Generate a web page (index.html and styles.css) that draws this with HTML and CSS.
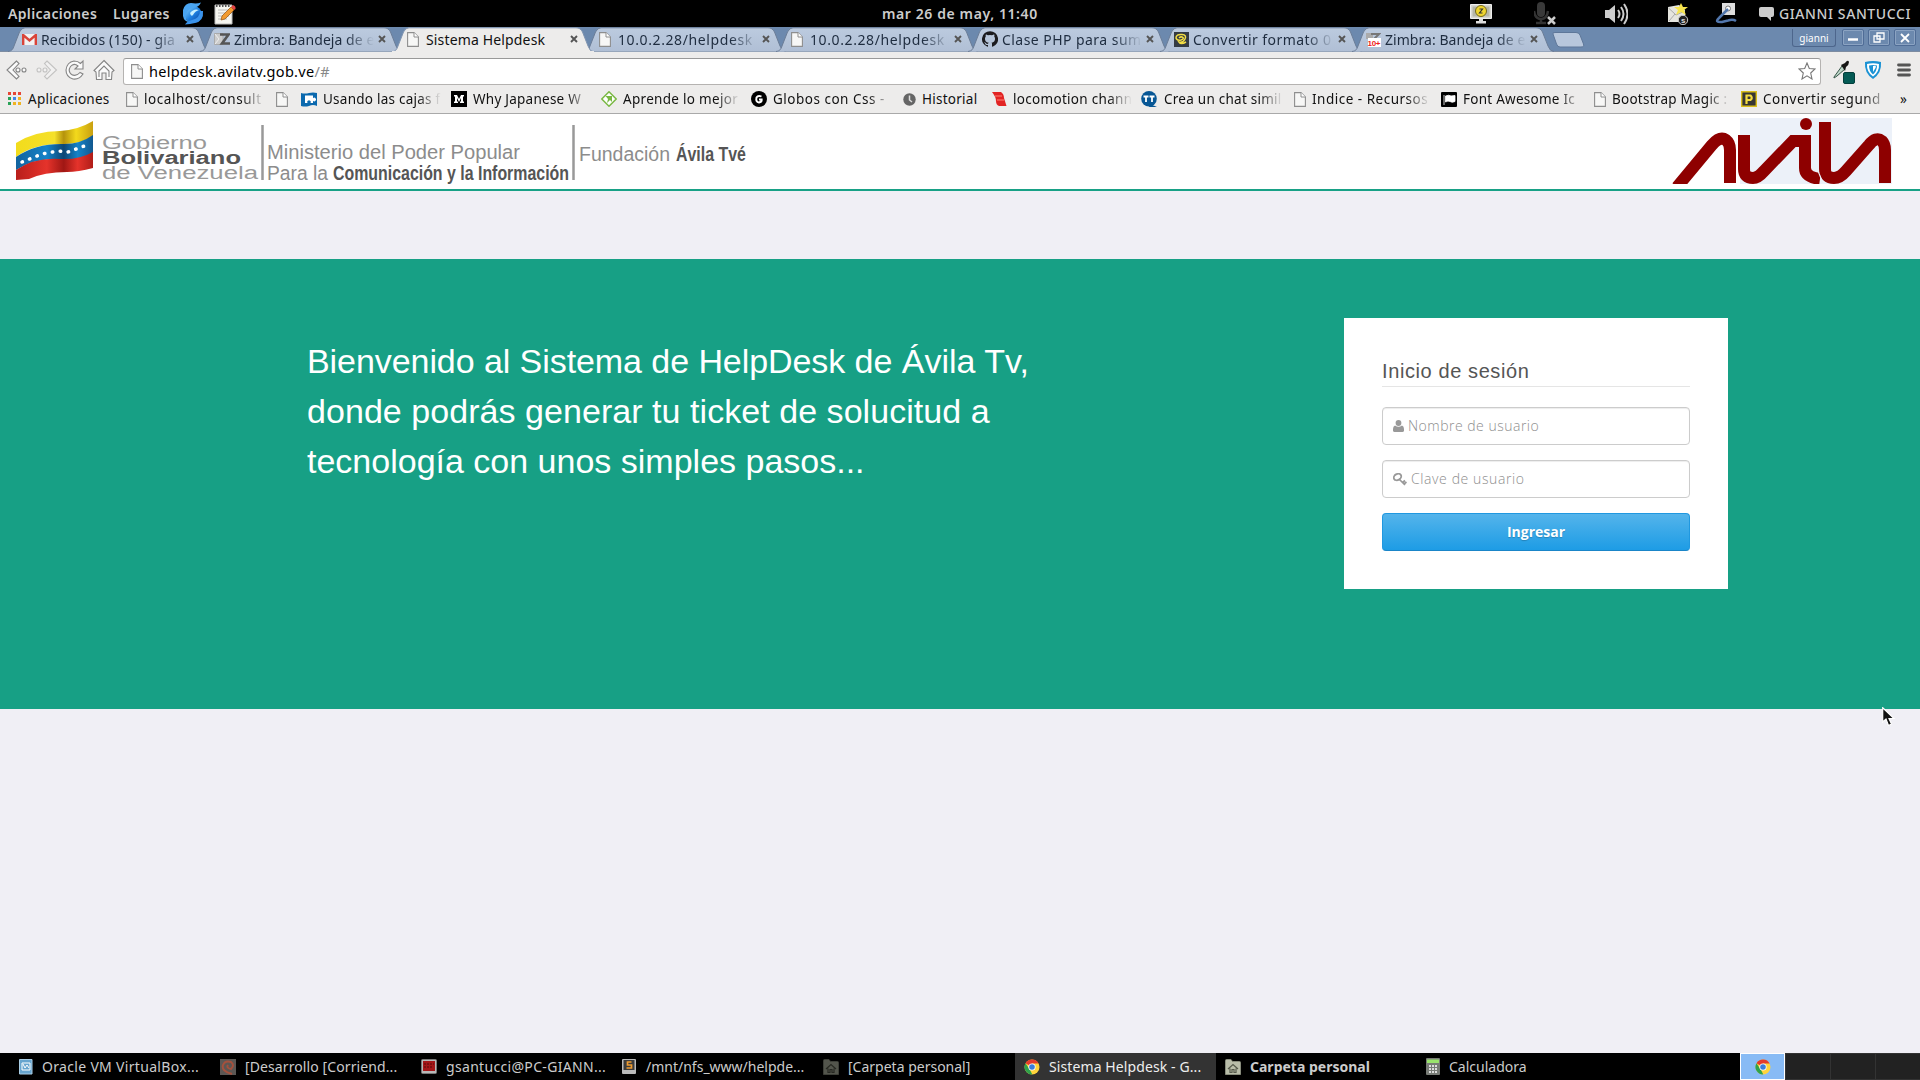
FILE: index.html
```html
<!DOCTYPE html>
<html lang="es">
<head>
<meta charset="utf-8">
<title>Sistema Helpdesk</title>
<link rel="stylesheet" href="styles.css">
</head>
<body>
<svg class="defs" aria-hidden="true">
  <defs>
    <linearGradient id="tabFill" x1="0" y1="0" x2="0" y2="1"><stop offset="0" stop-color="#bccbdf"/><stop offset="1" stop-color="#b0bfd5"/></linearGradient>
    <linearGradient id="orb" x1="0" y1="0" x2="1" y2="1"><stop offset="0" stop-color="#8fd8ff"/><stop offset=".5" stop-color="#1d7fe0"/><stop offset="1" stop-color="#06348c"/></linearGradient>
    <linearGradient id="fy" x1="0" y1="0" x2="1" y2="0"><stop offset="0" stop-color="#f2dc1c"/><stop offset=".5" stop-color="#f5e02a"/><stop offset=".62" stop-color="#b5930c"/><stop offset=".78" stop-color="#f3d91c"/><stop offset="1" stop-color="#c9a010"/></linearGradient>
    <linearGradient id="fb" x1="0" y1="0" x2="1" y2="0"><stop offset="0" stop-color="#12639f"/><stop offset=".4" stop-color="#1583c8"/><stop offset=".62" stop-color="#0d4674"/><stop offset=".8" stop-color="#1583c8"/><stop offset="1" stop-color="#12588f"/></linearGradient>
    <linearGradient id="fr" x1="0" y1="0" x2="1" y2="0"><stop offset="0" stop-color="#b81f1b"/><stop offset=".4" stop-color="#e5332b"/><stop offset=".62" stop-color="#a01714"/><stop offset=".8" stop-color="#e5332b"/><stop offset="1" stop-color="#b01d18"/></linearGradient>
  </defs>
  <symbol id="tab" viewBox="0 0 202 25"><path d="M0 24.5C4 24 5 22 6 19L11.500 5Q13.500.8 17 .8H184Q188.500.8 190.500 5L196 19Q198 24.500 202 24.500" fill="url(#tabFill)" stroke="#6b7d97"/></symbol>
  <symbol id="tabOn" viewBox="0 0 202 25"><path d="M0 25C4 24 5 22 6 19L11.500 5Q13.500.8 17 .8H184Q188.500.8 190.500 5L196 19Q198 25 202 25" fill="#edeceb" stroke="#8094b0"/><path d="M0 25H202" stroke="#edeceb" stroke-width="2"/></symbol>
  <symbol id="doc" viewBox="0 0 12 15"><path d="M.6.6H7L11.400 5V14.400H.6Z" fill="#f7f7f6" stroke="#8e8e8e" stroke-width="1.100"/><path d="M7 .6V5H11.400" fill="#fff" stroke="#8e8e8e"/></symbol>
  <symbol id="x" viewBox="0 0 8 8"><path d="M1 1L7 7M7 1L1 7" stroke="#555" stroke-width="1.900"/></symbol>
  <symbol id="chrome" viewBox="0 0 16 16"><circle cx="8" cy="8" r="7.500" fill="#ffd43b"/><path d="M8 8L1.500 4.200A7.500 7.500 0 0 1 14.700 4.600H8Z" fill="#e43b2d"/><path d="M1.500 4.200L6 11L8.300 15.500A7.500 7.500 0 0 1 1.500 4.200" fill="#2fa24c"/><circle cx="8" cy="8" r="3.600" fill="#fff"/><circle cx="8" cy="8" r="2.800" fill="#3b7ddb"/></symbol>
  <symbol id="folder" viewBox="0 0 16 16"><path d="M.5 1.500Q.5.5 1.500.5H6L7.500 2.500H14.500Q15.500 2.500 15.500 3.500V15.500H.5Z" fill="#b9bda9" stroke="#888c7c"/><path d="M3 10L8 5.500L13 10M5 9.500V13.500H7V10.500H9V13.500H11V9.500" fill="none" stroke="#565a4c" stroke-width="1.200"/></symbol>
</svg>

<header class="panel">
  <span class="p-apps">Aplicaciones</span><span class="p-places">Lugares</span>
  <svg class="p-orb" width="22" height="23" viewBox="0 0 22 23"><circle cx="11.500" cy="12.500" r="8.500" fill="url(#orb)"/><path d="M1 8Q3 1 9 1Q15 2 19 .5Q17 5 11 6Q5 7 4 13Q3 18 8 20Q2 20 1 14Z" fill="#4aa5f2"/><path d="M21 9Q22 19 13 21Q8 22 3 22.500Q5 19 10 18Q18 16 18 9Z" fill="#3a93ec"/><path d="M8 11Q12 6 17 8Q13 9 11 13Q9 15 8 11Z" fill="#c8f0ff"/></svg>
  <svg class="p-note" width="22" height="22" viewBox="0 0 22 22"><path d="M1 2H18V21H1Z" fill="#f5f5f0" stroke="#bbb"/><path d="M2 3H17" stroke="#555" stroke-width="2" stroke-dasharray="1.500 1.500"/><path d="M4 7H15M4 10H15M4 13H15M4 16H13" stroke="#bbb"/><path d="M7 17L8 13L17 4L20 7L11 16Z" fill="#f29a2e" stroke="#91520f" stroke-width=".7"/><path d="M17 4L19 2Q22 3 21.500 6L20 7Z" fill="#e34444"/></svg>
  <span class="p-clock">mar 26 de may, 11:40</span>
  <div class="tray">
    <svg width="22" height="20" viewBox="0 0 22 20"><path d="M.5.5H21.500V14.500H.5Z" fill="#d7d7d2" stroke="#eee"/><path d="M2.500 2.500H19.500V12.500H2.500Z" fill="#b5b6a9"/><circle cx="11" cy="7" r="5.500" fill="#f0d630" stroke="#766a18"/><path d="M9.500 5H12.500L9.500 9H12.500" fill="none" stroke="#333" stroke-width="1.200"/><path d="M9 15H13V17H16V19.500H6V17H9Z" fill="#ddd"/></svg>
    <svg width="22" height="23" viewBox="0 0 22 23"><rect x="3" y="0" width="8" height="15" rx="4" fill="#393939"/><path d="M0 9Q1 17 7 17Q13 17 14 9M7 16V21M2 21H12" fill="none" stroke="#333" stroke-width="2.500"/><path d="M14 15L21 22M21 15L14 22" stroke="#ccc" stroke-width="2.500"/></svg>
    <svg width="24" height="22" viewBox="0 0 24 22"><path d="M1 7H5L11 2V20L5 15H1Z" fill="#ccc"/><path d="M14 7Q17 11 14 15M17 4Q22 11 17 18M20 1Q27 11 20 21" fill="none" stroke="#ccc" stroke-width="2"/></svg>
    <svg width="22" height="22" viewBox="0 0 22 22"><path d="M1 4L12 2L18 7V19H1Z" fill="#e5e5df"/><path d="M1.500 5L9 12L18 8M2 18L8 11" fill="none" stroke="#aaa"/><path d="M14 0L16 4H21L17 7L19 12L14 9L9 12L11 7L7 4H12Z" fill="#f6e44e"/><circle cx="16" cy="17" r="4.700" fill="#222" stroke="#ccc"/><text x="14" y="20" class="tiny light">s</text></svg>
    <svg width="22" height="21" viewBox="0 0 22 21"><path d="M7 0H20V12H7Z" fill="#ddd"/><circle cx="13" cy="5.500" r="2.500" fill="#fff" stroke="#777"/><path d="M13 6L4 15Q-1 19.500 7 19L13 17.500Q18 16 21 18" fill="none" stroke="#5277ad" stroke-width="2.500"/></svg>
  </div>
  <svg class="p-chat" width="15" height="14" viewBox="0 0 15 14"><path d="M2 0H13Q15 0 15 2V8Q15 10 13 10H12V14L8 10H2Q0 10 0 8V2Q0 0 2 0Z" fill="#ccc"/></svg>
  <span class="p-user">GIANNI SANTUCCI</span>
</header>

<nav class="tabs">
  <div class="tab"><svg class="shape"><use href="#tab"/></svg><svg width="15" height="11" viewBox="0 0 15 11"><path d="M0 0H15V11H0Z" fill="#f2f2f2"/><path d="M1.200 11V1L7.500 6.500L13.800 1V11" fill="none" stroke="#d9443a" stroke-width="2.400"/></svg><span class="t t0">Recibidos (150) - gia</span><svg class="close"><use href="#x"/></svg></div>
  <div class="tab"><svg class="shape"><use href="#tab"/></svg><svg width="16" height="12" viewBox="0 0 16 12"><path d="M.5.5H9V11.500H.5Z" fill="#ccc" stroke="#aaa"/><path d="M1 1L5 6L1 11" fill="none" stroke="#eee"/><path d="M6 1.500H14.500L8 10.500H16" fill="none" stroke="#555" stroke-width="2.600"/></svg><span class="t t1">Zimbra: Bandeja de e</span><svg class="close"><use href="#x"/></svg></div>
  <div class="tab on"><svg class="shape"><use href="#tabOn"/></svg><svg class="doc"><use href="#doc"/></svg><span class="t t2">Sistema Helpdesk</span><svg class="close"><use href="#x"/></svg></div>
  <div class="tab"><svg class="shape"><use href="#tab"/></svg><svg class="doc"><use href="#doc"/></svg><span class="t t3">10.0.2.28/helpdesk</span><svg class="close"><use href="#x"/></svg></div>
  <div class="tab"><svg class="shape"><use href="#tab"/></svg><svg class="doc"><use href="#doc"/></svg><span class="t t3">10.0.2.28/helpdesk</span><svg class="close"><use href="#x"/></svg></div>
  <div class="tab"><svg class="shape"><use href="#tab"/></svg><svg width="16" height="16" viewBox="0 0 16 16"><path d="M8 .2A8 8 0 0 0 5.500 15.800C6 15.900 6 15.600 6 15.300V13.900C3.700 14.400 3.300 12.900 3.300 12.900C3 12 2.500 11.700 2.500 11.700C1.800 11.200 2.600 11.200 2.600 11.200C3.400 11.300 3.800 12 3.800 12C4.500 13.200 5.700 12.900 6.100 12.700C6.200 12.100 6.400 11.800 6.600 11.600C4.800 11.400 3 10.700 3 7.700C3 6.800 3.300 6.100 3.800 5.500C3.700 5.300 3.500 4.500 3.900 3.400C3.900 3.400 4.600 3.200 6 4.200A8 8 0 0 1 10 4.200C11.500 3.200 12.200 3.400 12.200 3.400C12.600 4.500 12.300 5.300 12.200 5.500C12.800 6.100 13 6.800 13 7.700C13 10.700 11.200 11.400 9.500 11.600C9.800 11.800 10 12.300 10 13V15.300C10 15.600 10.200 15.900 10.600 15.800A8 8 0 0 0 8 .2Z" fill="#1b1b1f"/></svg><span class="t t4">Clase PHP para sum</span><svg class="close"><use href="#x"/></svg></div>
  <div class="tab"><svg class="shape"><use href="#tab"/></svg><svg width="15" height="15" viewBox="0 0 15 15"><path d="M0 0H15V15H0Z" fill="#343b43"/><path d="M12 10Q7 13 5 10Q9 11 11 7Q13 3 8 2.500Q2 2 2 6Q3 9 7 8Q10 7 9 5.500Q7 4 5 6" fill="none" stroke="#f3de45" stroke-width="1.500"/></svg><span class="t t5">Convertir formato 0</span><svg class="close"><use href="#x"/></svg></div>
  <div class="tab"><svg class="shape"><use href="#tab"/></svg><svg width="15" height="15" viewBox="0 0 15 15"><path d="M0 1H7V7H0Z" fill="#aaa"/><path d="M5 2H13L7 8" fill="none" stroke="#777" stroke-width="2"/><path d="M2 6H15V15H2Z" fill="#fff"/><text x="1.500" y="14" class="tiny red" textLength="13">10+</text></svg><span class="t t1">Zimbra: Bandeja de e</span><svg class="close"><use href="#x"/></svg></div>
  <svg class="newtab" width="33" height="16" viewBox="0 0 33 16"><path d="M1 2Q0 .5 3 .5H24Q27 .5 28 3L31.500 12Q32.500 15 29 15H8Q5.500 15 4.500 12Z" fill="#b8c7dc" stroke="#5e7799"/></svg>
  <div class="wm"><span class="profile">gianni</span>
    <span class="wb"><svg width="12" height="12"><path d="M1 7.500H11" stroke="#fff" stroke-width="2.500"/></svg></span>
    <span class="wb"><svg width="12" height="12"><path d="M4 1H11V7H4ZM1 4H7V10H1Z" fill="none" stroke="#fff" stroke-width="1.300"/></svg></span>
    <span class="wb"><svg width="12" height="12"><path d="M2 2L10 10M10 2L2 10" stroke="#fff" stroke-width="1.800"/></svg></span></div>
</nav>

<div class="toolbar">
  <svg class="nav" width="110" height="24" viewBox="0 0 110 24"><g fill="#fafafa" stroke="#858585" stroke-width="1.100"><path d="M10.500 3L1 12L10.500 21L13 18.500L7 12L13 5.500Z"/><circle cx="12" cy="12" r="2"/><circle cx="18" cy="12" r="2"/><g opacity=".4"><path d="M41 3L50.500 12L41 21L38.500 18.500L44.500 12L38.500 5.500Z"/><circle cx="33" cy="12" r="2"/><circle cx="39" cy="12" r="2"/></g><path d="M77 3V11H69L72 8Q68 4.500 64.500 8.500Q61.500 13 65.500 16.500Q70 19 74 14.500L77 16Q73 22 67 21Q60 19 60 12Q61 4 68 3Q72 3 74.500 5.500Z"/><path d="M98 2.500L108 12.500L106 14L105.500 21.500H100V15H96V21.500H90.500L90 14L88 12.500Z"/><path d="M93 19V13L98 8L103 13V19" fill="none"/></g></svg>
  <div class="omni"><svg class="doc"><use href="#doc"/></svg><span class="url">helpdesk.avilatv.gob.ve<i>/#</i></span><svg class="star" width="18" height="18" viewBox="0 0 18 18"><path d="M9 1L11.300 6.500L17 7L12.700 11L14 17L9 13.800L4 17L5.300 11L1 7L6.700 6.500Z" fill="#fff" stroke="#777" stroke-width="1.100"/></svg></div>
  <svg class="pick" width="22" height="24" viewBox="0 0 22 24"><path d="M1 17L9 6L12 9L4 16L1 18Z" fill="#bcd5c8" stroke="#385649"/><path d="M8 5L12 3Q15-1 16 2Q16 5 13 7L12 11Z" fill="#161616"/><rect x="10.500" y="12.500" width="11" height="11" rx="1.500" fill="#045b55" stroke="#033f3c"/></svg>
  <svg class="shield" width="18" height="20" viewBox="0 0 18 20"><path d="M1 2Q9 0 17 2Q18 13 9 19Q0 13 1 2Z" fill="#1a92d4"/><path d="M3 4Q9 2.500 15 4Q15.500 12 9 16.500Q2.500 12 3 4Z" fill="#fff"/><path d="M5 5.500Q9 4.500 13 5.500Q13 11 9 14.500Q5 11 5 5.500Z" fill="#1a92d4"/><path d="M9 6Q13 5 11.500 8L9 12Z" fill="#fff"/></svg>
  <svg class="menu" width="14" height="14"><path d="M1.500 2H12.500M1.500 7H12.500M1.500 12H12.500" stroke="#555" stroke-width="2.800" stroke-linecap="round"/></svg>
</div>

<div class="marks">
  <div class="bm"><svg width="14" height="14"><g fill="none" stroke-width="3" stroke-dasharray="3 2"><path d="M0 1.500H14" stroke="#e64535"/><path d="M0 6.500H14" stroke="#4285e8"/><path d="M0 11.500H14" stroke="#efb322"/></g><path d="M0 5H3V8H0ZM0 10H3V13H0Z" fill="#29a257"/><path d="M10 5H13V8H10Z" fill="#efb322"/></svg><span class="b0">Aplicaciones</span></div>
  <div class="bm"><svg class="doc"><use href="#doc"/></svg><span class="b1 fade">localhost/consult</span></div>
  <div class="bm"><svg class="doc"><use href="#doc"/></svg></div>
  <div class="bm"><svg width="16" height="15"><path d="M0 1Q4 2 8 1Q12 0 16 1V14Q12 12 8 14Q4 15 0 14Z" fill="#0b69ae"/><path d="M4 3.500H12V6.200A1.800 1.800 0 1 1 12 8.800V11H9.500A1.800 1.800 0 1 0 6.500 11H4Z" fill="#fff"/></svg><span class="b2 fade">Usando las cajas f</span></div>
  <div class="bm"><svg width="16" height="16"><path d="M0 0H16V16H0Z"/><path d="M3 4H6L8 8L10 4H13V5L12 6V10L13 11V12H9V11L10 10V7L8 11L6 7V10L7 11V12H3V11L4 10V6L3 5Z" fill="#fff"/></svg><span class="b3 fade">Why Japanese W</span></div>
  <div class="bm"><svg width="16" height="16"><path d="M8 .8L15.200 8L8 15.200L.8 8Z" fill="#fff" stroke="#79b843" stroke-width="1.500"/><path d="M4.500 5H11V11L9 9L6 12L7 8Z" fill="#79b843"/></svg><span class="b4 fade">Aprende lo mejor</span></div>
  <div class="bm"><svg width="16" height="16"><circle cx="8" cy="8" r="8"/><path d="M10.500 5.500Q7 4 5.500 6.500Q4.500 11 8 11.500Q11 11 10.700 8.500H8" fill="none" stroke="#fff" stroke-width="1.900"/></svg><span class="b5 fade">Globos con Css -</span></div>
  <div class="bm"><svg width="13" height="13"><circle cx="6.500" cy="6.500" r="6.200" fill="#656565"/><path d="M6.500 2.500V7L9 9" fill="none" stroke="#ddd" stroke-width="1.500"/></svg><span class="b6">Historial</span></div>
  <div class="bm"><svg width="15" height="15"><path d="M0 0H9Q12 2 12 6L14.500 14H7Q4 13 4 9Q4 5 0 0Z" fill="#e22423"/><path d="M3 4H10M5 8H12" stroke="#ff8176"/></svg><span class="b7 fade">locomotion chann</span></div>
  <div class="bm"><svg width="17" height="16"><circle cx="8" cy="7.800" r="7.800" fill="#075795"/><path d="M9 13L16 16H8Z" fill="#075795"/><path d="M2.500 5.500H7.500M5 5V11M8.500 5.500H13.500M11 5V11" stroke="#fff" stroke-width="1.800"/></svg><span class="b8 fade">Crea un chat simil</span></div>
  <div class="bm"><svg class="doc"><use href="#doc"/></svg><span class="b9 fade">Indice - Recursos</span></div>
  <div class="bm"><svg width="16" height="15"><rect width="16" height="15" rx="1"/><path d="M3 3V13M4.500 4Q8 2.500 10 4L14 3.500V9.500Q11 11 9 9.500Q7 8.500 4.500 10Z" fill="#fff" stroke="#fff" stroke-width=".8"/></svg><span class="b10 fade">Font Awesome Ic</span></div>
  <div class="bm"><svg class="doc"><use href="#doc"/></svg><span class="b11 fade">Bootstrap Magic :</span></div>
  <div class="bm"><svg width="16" height="16"><path d="M.7.7H15.300V15.300H.7Z" fill="#373633" stroke="#d9be1c" stroke-width="1.400"/><path d="M5.500 13V4.500H9.500Q12 7 9.500 9H6" fill="none" stroke="#f5dc3f" stroke-width="2.200"/></svg><span class="b12 fade">Convertir segund</span></div>
  <div class="bm more">»</div>
</div>

<main>
  <header class="brand">
    <svg width="760" height="75" viewBox="0 0 760 75">
      <path d="M16 29Q35 17 60 17Q78 16 93 7V22Q79 31 62 30Q33 30 16 43Z" fill="url(#fy)"/>
      <path d="M16 43Q35 30 61 30Q79 31 93 21V40Q79 47 61 45Q34 44 16 56Z" fill="url(#fb)"/>
      <path d="M16 56Q35 43 60 45Q79 46 93 38V54Q78 58 67 58Q44 58 29 65L16 66Z" fill="url(#fr)"/>
      <path d="M22 48L42 40L58 37L68 38L87 31" fill="none" stroke="#fff" stroke-width="3.500" stroke-dasharray=".5 7.500" stroke-linecap="round"/>
      <g class="gov"><text x="102" y="34.500" textLength="105" lengthAdjust="spacingAndGlyphs">Gobierno</text><text x="102" y="49.500" class="dk" textLength="139" lengthAdjust="spacingAndGlyphs">Bolivariano</text><text x="102" y="65" textLength="156" lengthAdjust="spacingAndGlyphs">de Venezuela</text></g>
      <path d="M262.500 11V66M573.500 11V66" stroke="#999" stroke-width="2.500"/>
      <g class="min"><text x="267" y="45" textLength="253" lengthAdjust="spacingAndGlyphs">Ministerio del Poder Popular</text><text x="267" y="65.500" textLength="61" lengthAdjust="spacingAndGlyphs">Para la</text><text x="333" y="65.500" class="dk" textLength="236" lengthAdjust="spacingAndGlyphs">Comunicación y la Información</text><text x="579" y="47" textLength="91" lengthAdjust="spacingAndGlyphs">Fundación</text><text x="676" y="47" class="dk" textLength="70" lengthAdjust="spacingAndGlyphs">Ávila Tvé</text></g>
    </svg>
    <svg width="260" height="70" viewBox="0 0 260 70"><path d="M80 4H232V70H80Z" fill="#ecf1f9"/><g fill="none" stroke="#8e0000" stroke-width="12"><path d="M17 73L52 31Q60 22 66 26Q70 29 70 36V69"/><path d="M84 21V55Q84 64 93 64Q98 64 104 57L133 27H145V54Q145 63 160 65"/><path d="M165 8V55Q165 64 174 64Q180 64 186 57L209 31Q216 22 222 27Q225 30 225 36V69"/></g><circle cx="146" cy="10" r="6" fill="#8e0000"/><path d="M158 8V57L162.500 68" fill="none" stroke="#ecf1f9" stroke-width="1.200"/></svg>
  </header>
  <section class="hero">
    <p class="welcome"><span class="w1">Bienvenido al Sistema de HelpDesk de</span> Ávila Tv,<br><span class="w2">donde podrás generar tu ticket de solucitud a</span><br>tecnología con unos simples pasos...</p>
    <form class="login">
      <h1>Inicio de sesión</h1>
      <div class="field"><svg width="11" height="12" viewBox="0 0 11 12"><circle cx="5.500" cy="3" r="2.900" fill="#999"/><path d="M2 5.500Q5.500 8 9 5.500Q11 6 11 9V11Q10.500 12 9.500 12H1.500Q.5 12 0 11V9Q0 6 2 5.500Z" fill="#999"/></svg><span class="user">Nombre de usuario</span></div>
      <div class="field"><svg width="14" height="13" viewBox="0 0 14 13"><ellipse cx="4.500" cy="4" rx="3.900" ry="3" transform="rotate(-30 4.500 4)" fill="none" stroke="#999" stroke-width="1.800"/><path d="M6 6L12 12M9.500 9.500L12 7.500M11 11L13.500 9" stroke="#999" stroke-width="1.700"/></svg><span class="pass">Clave de usuario</span></div>
      <button type="button">Ingresar</button>
    </form>
  </section>
  <svg class="cursor" width="14" height="20" viewBox="0 0 14 20"><path d="M.7.7V15L4 12L6.500 18.500L9.500 17L7 11.500H12Z" fill="#111" stroke="#fff" stroke-width="1.200"/></svg>
</main>

<footer class="taskbar">
  <div class="task"><svg width="14" height="16"><path d="M.5.500H13V15H.5Z" fill="#67a5cf" stroke="#a9cde5"/><path d="M3 4H11V11H3Z" fill="none" stroke="#fff"/><path d="M4 5L6 9L8 6L10 9" fill="none" stroke="#fff"/></svg><span class="k0">Oracle VM VirtualBox...</span></div>
  <div class="task"><svg width="16" height="16"><path d="M0 0H16V16H0Z" fill="#5b5754"/><path d="M12 15Q1 12 3 6Q5 1 11 3Q15 6 11 10Q6 9 8 6" fill="none" stroke="#a4513d" stroke-width="2"/></svg><span class="k1">[Desarrollo [Corriend...</span></div>
  <div class="task"><svg width="16" height="16"><rect x=".5" y=".5" width="15" height="14" rx="1" fill="#b8b8b8" stroke="#777"/><path d="M2 2H14V12H2Z" fill="#a51618"/><path d="M3 5H13M3 8H11" stroke="#550b0b" stroke-dasharray="2 1"/></svg><span class="k2">gsantucci@PC-GIANN...</span></div>
  <div class="task"><svg width="15" height="16"><rect width="14" height="15" rx="1" fill="#bbb"/><path d="M1.500 1H12.500V11H1.500Z" fill="#3b3b3b"/><path d="M9.500 3H5.500V6H9.500V9H4.500" fill="none" stroke="#ef9c31" stroke-width="1.700"/></svg><span class="k3">/mnt/nfs_www/helpde...</span></div>
  <div class="task"><svg class="dim" width="16" height="16"><use href="#folder"/></svg><span class="k4">[Carpeta personal]</span></div>
  <div class="task active"><svg width="16" height="16"><use href="#chrome"/></svg><span class="k5">Sistema Helpdesk - G...</span></div>
  <div class="task"><svg width="16" height="16"><use href="#folder"/></svg><span class="k6">Carpeta personal</span></div>
  <div class="task"><svg width="14" height="17"><rect width="14" height="17" rx="1" fill="#777b75"/><path d="M1 1.500H13V5H1Z" fill="#99e36c"/><path d="M3 8H12M3 11H12M3 14H12" stroke="#ddd" stroke-width="2" stroke-dasharray="2 1"/></svg><span class="k7">Calculadora</span></div>
  <div class="spaces"><div class="cur"><svg width="16" height="16"><use href="#chrome"/></svg></div><div></div><div></div><div></div></div>
</footer>
</body>
</html>
```
FILE: styles.css
```css
* { box-sizing: border-box; }
body { margin: 0; width: 1920px; height: 1080px; overflow: hidden; display: flex; flex-direction: column; background: #f0eff5; font-family: "Noto Sans", sans-serif; font-size: 14px; white-space: nowrap; }
svg { flex: none; display: block; }
.defs { position: absolute; width: 0; height: 0; }
.tiny { font: bold 8px "Liberation Sans", sans-serif; }
.light { fill: #ddd; }
.red { fill: #e22; }
.doc { width: 12px; height: 15px; }

.panel { height: 27px; flex: none; background: #000; color: #ccc; display: grid; grid-template-columns: 105px 69px 32px 667px 553px 324px 20px 1fr; padding-left: 8px; align-items: center; font-weight: 600; line-height: 27px; letter-spacing: .35px; }
.p-clock { letter-spacing: .6px; padding-left: 1px; }
.tray { display: grid; grid-template-columns: 64px 70px 63px 48px 22px; padding-left: 36px; align-items: center; }
.p-chat { margin-left: 1px; }
.p-user { font-weight: 500; letter-spacing: .6px; padding-left: 1px; }

.tabs { height: 25px; flex: none; background: #6c89ae; display: flex; padding-left: 8px; border-bottom: 1px solid #7d8ca1; color: #1e2c3f; }
.tab { position: relative; width: 192px; flex: none; display: flex; align-items: center; padding: 0 6px 0 14px; gap: 4px; }
.tab.on { z-index: 1; color: #111; }
.tab > * { position: relative; }
.tab .shape { position: absolute; left: 0; top: 0; width: 202px; height: 25px; }
.tab .t { flex: 1; line-height: 24px; padding-top: 1px; -webkit-mask-image: linear-gradient(90deg, #000 80%, transparent); mask-image: linear-gradient(90deg, #000 80%, transparent); }
.tab.on .t { -webkit-mask-image: none; mask-image: none; }
.t0 { letter-spacing: .15px; }
.t1 { letter-spacing: .05px; }
.tab .t2 { letter-spacing: .15px; }
.t3 { letter-spacing: .6px; }
.t4 { letter-spacing: .45px; }
.t5 { letter-spacing: .45px; }
.tab .doc { margin: 0 3px 0 1px; }
.close { width: 8px; height: 8px; }
.newtab { margin: 5px 0 0 8px; }
.wm { margin-left: auto; display: flex; padding: 2px 4px 0 0; gap: 4px; }
.profile { width: 44px; height: 18px; border: 1px solid #4d668c; border-top: 0; border-radius: 0 0 3px 3px; color: #fff; font-size: 10px; line-height: 19px; text-align: center; margin-right: 2px; }
.wb { width: 22px; height: 17px; border: 1px solid #4f6c96; border-radius: 2px; box-shadow: inset 0 0 0 1px #8ba3c2; display: flex; align-items: center; justify-content: center; }

.toolbar { height: 36px; flex: none; background: #edeceb; display: flex; align-items: center; padding: 0 9px 1px 6px; }
.omni { margin-left: 7px; width: 1698px; height: 27px; margin-top: 3px; border: 1px solid #b5b3b1; border-top-color: #999; border-radius: 3px; background: #fff; display: flex; align-items: center; padding: 0 4px 0 7px; font-size: 14.500px; letter-spacing: .3px; }
.url { margin-left: 6px; flex: 1; }
.url i { font-style: normal; color: #888; }
.pick { margin: 4px 0 0 12px; }
.shield { margin-left: 9px; }
.menu { margin-left: auto; }

.marks { height: 26px; flex: none; background: #edeceb; border-bottom: 1px solid #a9a9a9; display: grid; grid-template-columns: 118px 150px 25px 150px 150px 150px 152px 89px 149px 153px 147px 153px 147px 159px 1fr; padding: 0 0 3px 8px; font-size: 13.500px; letter-spacing: .25px; color: #111; }
.bm { display: flex; align-items: center; gap: 6px; padding-right: 11px; min-width: 0; }
.bm span { line-height: 20px; }
.bm .fade { -webkit-mask-image: linear-gradient(90deg, #000 80%, transparent); mask-image: linear-gradient(90deg, #000 80%, transparent); flex: 1; }
.b1 { letter-spacing: .55px; }
.b4, .b7 { letter-spacing: .3px; }
.b5, .b9 { letter-spacing: .5px; }
.b12 { letter-spacing: .5px; }

main { flex: 1; position: relative; }
.brand { height: 77px; background: #fff; border-bottom: 2px solid #18a186; display: flex; justify-content: space-between; }
.gov { font: 18px "Liberation Sans", sans-serif; fill: #999; }
.min { font: 19.500px "Liberation Sans", sans-serif; fill: #8c8c8c; }
.gov .dk, .min .dk { font-weight: bold; fill: #555; }
.hero { margin-top: 68px; height: 450px; background: #17a085; display: flex; justify-content: space-between; align-items: flex-start; padding: 59px 192px 0 307px; }
.welcome { margin: 18px 0 0; font: 34px/50px "Liberation Sans", sans-serif; color: #fff; }
.w1 { letter-spacing: -.07px; }
.w2 { letter-spacing: .05px; }
.login { width: 384px; height: 271px; background: #fff; padding: 38px; display: flex; flex-direction: column; gap: 15px; }
.login h1 { margin: 0 0 5px; height: 31px; border-bottom: 1px solid #e5e5e5; font: 20px/30px "Liberation Sans", sans-serif; letter-spacing: .6px; color: #555; }
.field { height: 38px; border: 1px solid #ccc; border-radius: 4px; box-shadow: inset 0 1px 1px rgba(0,0,0,.075); display: flex; align-items: center; gap: 4px; padding: 0 10px; color: #8e8e8e; font: 300 14px "Open Sans", sans-serif; letter-spacing: .5px; }
.field span { padding-bottom: 2px; }
.pass { letter-spacing: .6px; }
.login button { height: 38px; border: 1px solid #2098e0; border-bottom-color: #1a85c8; border-radius: 4px; background: linear-gradient(#54b4eb, #1d9ce5); color: #fff; font: bold 14px "Open Sans", sans-serif; text-shadow: 0 1px 1px rgba(0,0,0,.2); padding: 0 0 2px; }
.cursor { position: absolute; left: 1882px; top: 593px; }

.taskbar { height: 27px; flex: none; background: #000; color: #ccc; display: flex; padding-left: 10px; }
.task { width: 201px; display: flex; align-items: center; gap: 9px; padding-left: 9px; }
.task.active { background: #333; color: #eee; }
.k0, .k2 { letter-spacing: .32px; }
.k1, .k5 { letter-spacing: .1px; }
.k6 { font-weight: bold; }
.dim { opacity: .45; }
.spaces { margin-left: auto; width: 180px; display: grid; grid-template-columns: repeat(4, 45px); background: #222; }
.spaces div { border: 1px solid #333; border-width: 1px 0 1px 1px; }
.spaces .cur { background: #88bbf5; border: 1px solid #fff; display: flex; align-items: center; justify-content: center; }
```
